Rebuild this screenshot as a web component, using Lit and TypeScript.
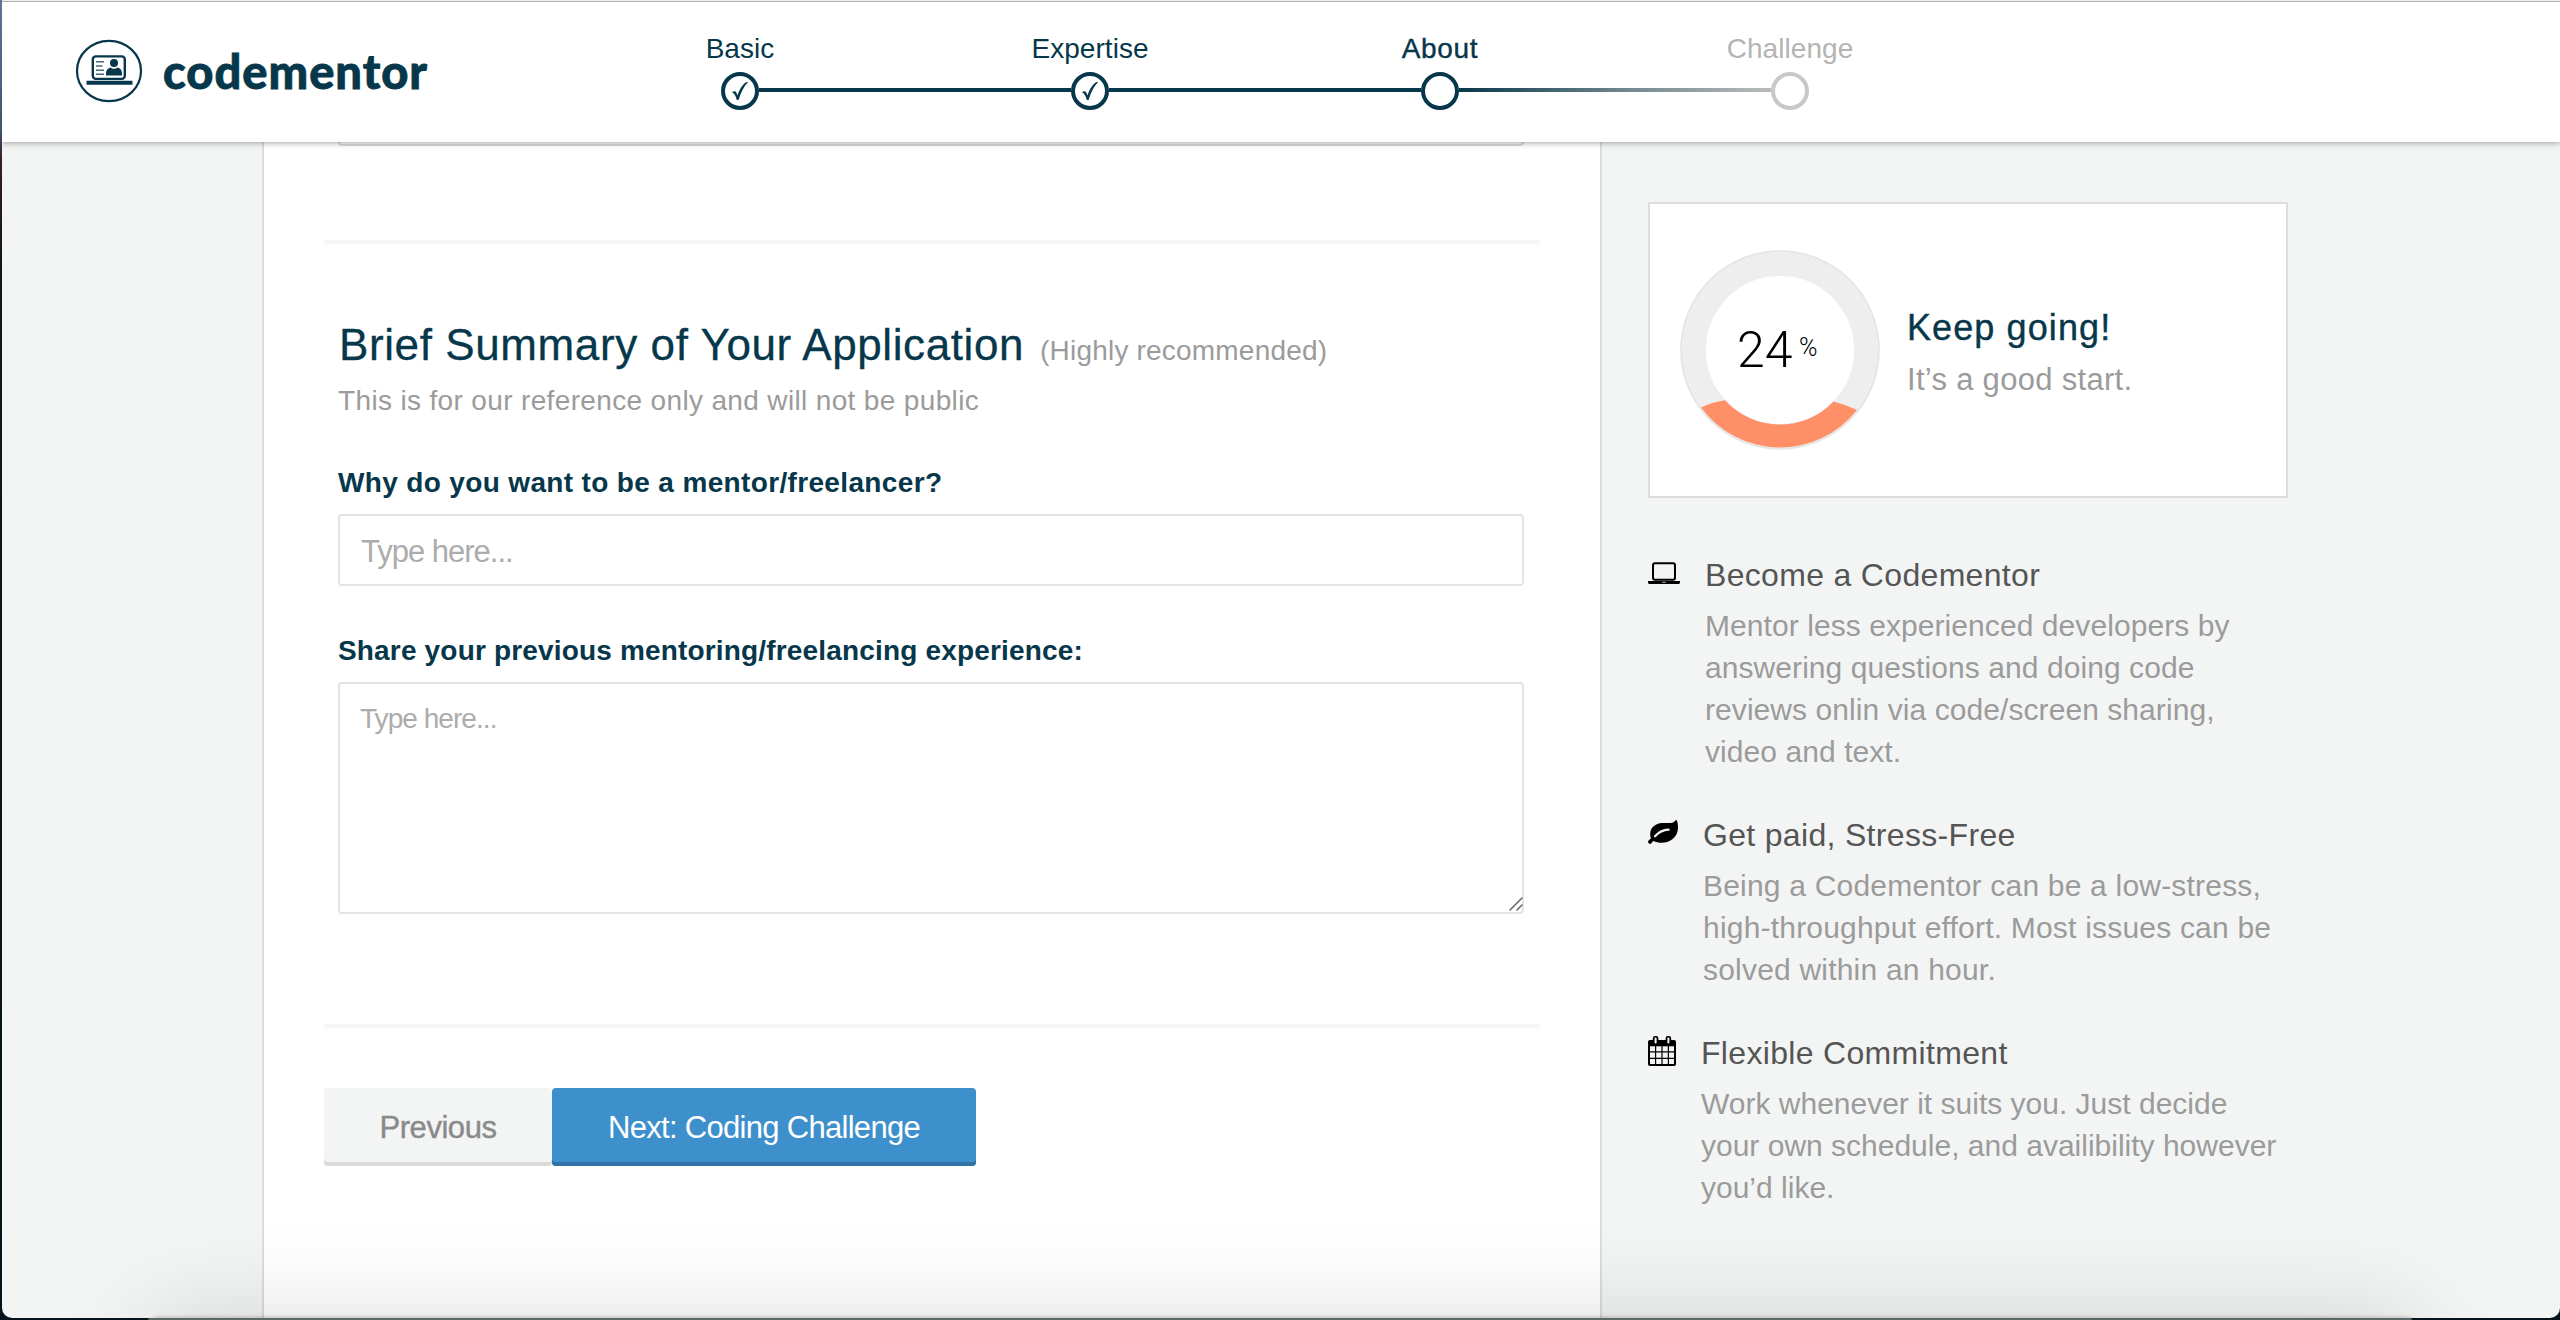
import { LitElement, html, css, svg } from "lit";
import { customElement, property } from "lit/decorators.js";
import { classMap } from "lit/directives/class-map.js";

type StepState = "done" | "current" | "todo";

@customElement("cm-logo")
class CmLogo extends LitElement {
  static styles = css`
    :host { display: flex; align-items: center; color: #07374a; }
    .mark { width: 68px; height: 64px; display: block; }
    .word {
      font: 900 47px/60px Lato, "Open Sans", sans-serif;
      margin-left: 20px;
      letter-spacing: 1px;
      -webkit-text-stroke: 0.8px currentColor;
    }
  `;
  render() {
    return html`
      <svg class="mark" viewBox="0 0 68 64" fill="none" stroke="currentColor">
        <ellipse cx="34" cy="32" rx="32" ry="30.2" stroke-width="2.2" />
        <rect x="17.8" y="17.4" width="32" height="22.5" rx="3" stroke-width="2.4" />
        <path d="M11.5 43.7H57.5" stroke-width="4" />
        <path d="M21 22.8h8M21 27h6.5M21 31.2h8M21 35.2h8" stroke-width="1.4" opacity="0.75" />
        <circle cx="39" cy="24" r="4" fill="currentColor" stroke="none" />
        <path
          d="M31 36.6v-2.2c0-3.2 1.6-5.4 4.6-5.9 1.6 1.8 5.2 1.8 6.8 0 3 .5 4.6 2.7 4.6 5.9v2.2z"
          fill="currentColor" stroke="none"
        />
      </svg>
      <span class="word">codementor</span>
    `;
  }
}

@customElement("cm-step")
class CmStep extends LitElement {
  @property() label = "";
  @property() state: StepState = "todo";
  @property({ type: Boolean }) last = false;
  static styles = css`
    :host { display: flex; flex-direction: column; align-items: center; width: 350px; color: #07374a; }
    .label { font-size: 28px; line-height: 32px; letter-spacing: 0.05px; padding-top: 1px; margin-bottom: 7px; }
    .label.current { letter-spacing: 0.7px; -webkit-text-stroke: 0.4px currentColor; }
    .label.todo { color: #b4b4b4; }
    .rail { display: grid; grid-template-columns: 156px 38px 156px; align-items: center; width: 350px; height: 38px; }
    .dot {
      grid-column: 2;
      box-sizing: border-box;
      width: 38px;
      height: 38px;
      border: 4px solid currentColor;
      border-radius: 50%;
      display: flex;
      align-items: center;
      justify-content: center;
    }
    .dot.todo { border-color: #c8c8c8; }
    .line { grid-column: 3; height: 4px; width: 312px; background: currentColor; margin-top: -2px; }
    .line.current { background: linear-gradient(90deg, #07374a, #748991 55%, #b8bcbb); }
    svg { width: 18px; height: 20px; display: block; }
  `;
  render() {
    return html`
      <div class=${classMap({ label: true, [this.state]: true })}>${this.label}</div>
      <div class="rail">
        <span class=${classMap({ dot: true, [this.state]: true })}>
          ${this.state === "done"
            ? html`<svg viewBox="0 0 18 20">
                <path d="M1 11.2c1.3-1 2.6-1.300 3.400-.8 1 .9 1.600 2.200 2 4C8.500 8.500 11 4 14.200 1.700c1-.7 2.200-.7 2.800-.5C12.600 5.500 9.800 11.500 7.800 18.500c-.6.600-1.400.600-2 .5C4.900 15.500 3.600 12.500 1 11.200z" fill="#07374a" />
              </svg>`
            : null}
        </span>
        ${this.last ? null : html`<span class=${classMap({ line: true, [this.state]: true })}></span>`}
      </div>
    `;
  }
}

@customElement("cm-progress")
class CmProgress extends LitElement {
  @property({ type: Number }) value = 0;
  static styles = css`
    :host { display: grid; width: 200px; height: 200px; }
    .ring, .value { grid-area: 1 / 1; }
    .ring { width: 200px; height: 200px; display: block; }
    .value { display: flex; padding: 70px 0 0 57px; color: #000; }
    .number { font: 300 50px/60px Roboto, "Liberation Sans", sans-serif; width: 62px; }
    .unit { font: 300 25px/56px Roboto, "Liberation Sans", sans-serif; }
  `;
  render() {
    return html`
      <svg class="ring" viewBox="0 0 200 200">
        <circle cx="100" cy="100" r="86.5" fill="none" stroke="#eeeeee" stroke-width="25" />
        <circle cx="100" cy="100" r="99" fill="none" stroke="#e4e4e4" stroke-width="1.6" />
        <path d="M21 157.500Q32 152 45 150.200A74 74 0 0 0 153.500 151.600Q165 154.500 177 160A98 98 0 0 1 21 157.500z" fill="#ff8f67" />
      </svg>
      <div class="value"><span class="number">${this.value}</span><span class="unit">%</span></div>
    `;
  }
}

const icons = {
  laptop: svg`<rect x="5" y="1.200" width="22" height="16.600" rx="2" fill="none" stroke="#000" stroke-width="2" />
    <path d="M0 19h32v1.400c0 1-1 1.600-2.200 1.600H2.200C1 22 0 21.400 0 20.400z" />
    <path d="M14.300 20.300h3.400" stroke="#f3f5f4" stroke-width=".8" />`,
  leaf: svg`<path d="M28.600 0c.9 1.700 1.400 4.300 1.400 7.500C30 16.500 23 22.800 13.500 22.800c-3 0-5.500-.8-8-1.800-1 .6-1.800 2-2.600 2.800-.9.600-1.800 0-2.300-.7-.6-.8-.8-1.600-.2-2.400.7-1 2.200-1.600 2.500-2.700C2.300 16.500 2.200 15 2.200 14 2.200 7.500 7.500 3.400 14 3c4-.2 8.600.5 11.300-.8C26.500 1.600 27.300.2 28.600 0z" />
    <path d="M7 16.200C10.500 12.500 14.500 9.900 20.600 9.700" fill="none" stroke="#f3f5f4" stroke-width="2.300" stroke-linecap="round" />`,
  calendar: svg`<path d="M2 4h24a2 2 0 0 1 2 2v22a2 2 0 0 1-2 2H2a2 2 0 0 1-2-2V6a2 2 0 0 1 2-2z" />
    <path d="M2 10.300h24V28H2z" fill="#f3f5f4" />
    <path d="M7.600 10v18M14 10v18M20.400 10v18M2 15.900h24M2 22.400h24" stroke="#000" stroke-width="1.200" />
    <rect x="4.800" y="0" width="5.600" height="8.600" rx="2.400" /><rect x="17.600" y="0" width="5.600" height="8.600" rx="2.400" />
    <rect x="6.600" y="1.600" width="2" height="5.800" rx="1" fill="#f3f5f4" /><rect x="19.400" y="1.600" width="2" height="5.800" rx="1" fill="#f3f5f4" />`,
};

interface Benefit {
  icon: keyof typeof icons;
  width: number;
  height: number;
  title: string;
  lines: string[];
}

@customElement("cm-benefit")
class CmBenefit extends LitElement {
  @property({ attribute: false }) item!: Benefit;
  static styles = css`
    :host { display: flex; align-items: flex-start; gap: 25px; }
    .icon { flex: none; display: block; }
    .icon.laptop { width: 32px; height: 22px; margin-top: 7px; }
    .icon.leaf { width: 30px; height: 24px; margin-top: 5px; }
    .icon.calendar { width: 28px; height: 30px; margin-top: 3px; }
    .title { font-size: 32px; line-height: 40px; color: #555; letter-spacing: 0.32px; margin-bottom: 10px; white-space: nowrap; }
    .body { font-size: 30px; line-height: 42px; color: #9b9b9b; letter-spacing: 0.07px; white-space: nowrap; }
    .body.leaf { letter-spacing: 0.2px; }
    .body.calendar { letter-spacing: 0; }
    .line { display: block; }
  `;
  render() {
    const { icon, width, height, title, lines } = this.item;
    return html`
      <svg class="icon ${icon}" viewBox="0 0 ${width} ${height}">${icons[icon]}</svg>
      <div>
        <div class="title">${title}</div>
        <div class="body ${icon}">${lines.map((l) => html`<span class="line">${l}</span>`)}</div>
      </div>
    `;
  }
}

@customElement("app-root")
class AppRoot extends LitElement {
  private steps: { label: string; state: StepState }[] = [
    { label: "Basic", state: "done" },
    { label: "Expertise", state: "done" },
    { label: "About", state: "current" },
    { label: "Challenge", state: "todo" },
  ];
  private benefits: Benefit[] = [
    {
      icon: "laptop", width: 32, height: 22, title: "Become a Codementor",
      lines: ["Mentor less experienced developers by", "answering questions and doing code", "reviews onlin via code/screen sharing,", "video and text."],
    },
    {
      icon: "leaf", width: 30, height: 24, title: "Get paid, Stress-Free",
      lines: ["Being a Codementor can be a low-stress,", "high-throughput effort. Most issues can be", "solved within an hour."],
    },
    {
      icon: "calendar", width: 28, height: 30, title: "Flexible Commitment",
      lines: ["Work whenever it suits you. Just decide", "your own schedule, and availibility however", "you’d like."],
    },
  ];

  static styles = css`
    :host {
      display: block;
      position: relative;
      box-sizing: border-box;
      width: 2560px;
      height: 1320px;
      overflow: hidden;
      padding: 0 0 2px 2px;
      background: linear-gradient(#5a7797, #42546f 130px, #3a1c24 160px, #12161b 260px, #04141a);
      font-family: "Liberation Sans", Arial, Helvetica, sans-serif;
    }
    .window {
      position: relative;
      display: flex;
      flex-direction: column;
      height: 1318px;
      overflow: hidden;
      border-radius: 0 0 10px 10px;
      background: #f3f5f4;
    }
    .header {
      position: relative;
      z-index: 1;
      flex: none;
      box-sizing: border-box;
      height: 142px;
      display: flex;
      align-items: flex-start;
      background: #fff;
      border-top: 1px solid #f0f0f0;
      box-shadow: inset 0 1px 0 #b0b0b0, 0 1px 6px rgba(0, 0, 0, 0.36);
    }
    .brand { margin: 38px 0 0 73px; width: 490px; }
    .steps { display: flex; margin-top: 31px; }
    .content { flex: 1; min-height: 0; display: flex; padding-left: 260px; }
    .panel {
      flex: none;
      box-sizing: border-box;
      width: 1340px;
      background: #fff;
      border: solid #dadddc;
      border-width: 0 2px;
      padding: 0 60px;
      display: flex;
      flex-direction: column;
    }
    .group { padding: 0 14px; display: flex; flex-direction: column; }
    .cut { height: 4px; box-sizing: border-box; width: 1186px; border: 2px solid #d8dedc; border-top: 0; border-radius: 0 0 4px 4px; }
    .rule { height: 4px; background: #f5f6f6; flex: none; }
    .rule.first { margin: 94px 0 75px; }
    .rule.second { margin: 110px 0 60px; }
    .heading { display: flex; align-items: baseline; height: 52px; line-height: 52px; margin: 0; padding-left: 1px; font-weight: 400; }
    .title { font-size: 44px; color: #07374a; letter-spacing: 0.6px; -webkit-text-stroke: 0.3px currentColor; }
    .note { font-size: 28px; color: #9b9b9b; letter-spacing: 0.2px; margin-left: 16px; }
    .hint { font-size: 28px; line-height: 34px; color: #9b9b9b; letter-spacing: 0.35px; margin-top: 13px; }
    .label { font-size: 28px; line-height: 34px; font-weight: 700; color: #07374a; letter-spacing: 0.35px; margin: 48px 0 14px; }
    .label.share { letter-spacing: 0.17px; }
    .field {
      display: block;
      box-sizing: border-box;
      width: 1186px;
      margin: 0;
      border: 2px solid #e1e6e5;
      border-radius: 4px;
      background: #fff;
      font-family: inherit;
      resize: none;
      outline: none;
    }
    .field::placeholder { color: #acacac; opacity: 1; }
    input.field { height: 72px; font-size: 31px; letter-spacing: -1px; padding: 4px 20px 0 21px; }
    textarea.field { height: 232px; font-size: 28px; line-height: 34px; letter-spacing: -0.95px; padding: 18px 20px 10px; overflow: hidden; }
    .area { position: relative; }
    .grip { position: absolute; right: 3px; bottom: 3px; width: 14px; height: 14px; }
    .actions { display: flex; }
    .btn {
      box-sizing: border-box;
      height: 78px;
      border: 0;
      border-radius: 4px;
      font: 31px/74px "Liberation Sans", Arial, sans-serif;
      letter-spacing: -0.7px;
      padding: 1px 0 0;
      white-space: nowrap;
      text-align: center;
    }
    .prev { width: 228px; color: #8a8a8a; background: #f3f5f4; letter-spacing: -0.45px; box-shadow: inset 0 -4px 0 #d9dbda; -webkit-text-stroke: 0.4px currentColor; }
    .next { width: 424px; color: #fff; background: #3d90cc; box-shadow: inset 0 -4px 0 #3173a6; }
    .side { padding: 60px 0 0 46px; width: 640px; display: flex; flex-direction: column; }
    .card {
      box-sizing: border-box;
      height: 296px;
      background: #fff;
      border: 2px solid #dcdcdc;
      padding: 46px 30px;
      display: flex;
      margin-bottom: 57px;
    }
    .cheer { padding: 56px 0 0 27px; }
    .keep { font-size: 36px; line-height: 44px; color: #07374a; letter-spacing: 1.1px; -webkit-text-stroke: 0.4px currentColor; }
    .start { font-size: 31px; line-height: 40px; color: #9b9b9b; letter-spacing: 0.3px; margin-top: 10px; }
    .benefits { display: flex; flex-direction: column; gap: 42px; }
    .dock {
      position: absolute;
      left: 148px;
      top: 1318px;
      width: 2264px;
      height: 400px;
      border-radius: 8px;
      box-shadow: 0 0 100px rgba(0, 0, 0, 0.14), 0 0 4px rgba(0, 0, 0, 0.3);
    }
    .dock-edge { position: absolute; left: 148px; top: 1318px; width: 2264px; height: 2px; background: #5b6a69; border-radius: 4px 4px 0 0; }
  `;

  render() {
    return html`
      <div class="window">
        <header class="header">
          <cm-logo class="brand"></cm-logo>
          <nav class="steps">
            ${this.steps.map(
              (s, i) => html`<cm-step .label=${s.label} .state=${s.state} .last=${i === this.steps.length - 1}></cm-step>`
            )}
          </nav>
        </header>
        <main class="content">
          <section class="panel">
            <div class="group"><div class="cut"></div></div>
            <div class="rule first"></div>
            <div class="group">
              <h2 class="heading">
                <span class="title">Brief Summary of Your Application</span>
                <span class="note">(Highly recommended)</span>
              </h2>
              <div class="hint">This is for our reference only and will not be public</div>
              <label class="label">Why do you want to be a mentor/freelancer?</label>
              <input class="field" placeholder="Type here..." />
              <label class="label share">Share your previous mentoring/freelancing experience:</label>
              <div class="area">
                <textarea class="field" placeholder="Type here..."></textarea>
                <svg class="grip" viewBox="0 0 14 14" stroke="#6a6a6a" stroke-width="1.600" stroke-linecap="round">
                  <path d="M1 13L13 1M8 13L13 8" />
                </svg>
              </div>
            </div>
            <div class="rule second"></div>
            <div class="actions">
              <button class="btn prev">Previous</button>
              <button class="btn next">Next: Coding Challenge</button>
            </div>
          </section>
          <aside class="side">
            <div class="card">
              <cm-progress .value=${24}></cm-progress>
              <div class="cheer">
                <div class="keep">Keep going!</div>
                <div class="start">It’s a good start.</div>
              </div>
            </div>
            <div class="benefits">
              ${this.benefits.map((b) => html`<cm-benefit .item=${b}></cm-benefit>`)}
            </div>
          </aside>
        </main>
        <div class="dock"></div>
      </div>
      <div class="dock-edge"></div>
    `;
  }
}
